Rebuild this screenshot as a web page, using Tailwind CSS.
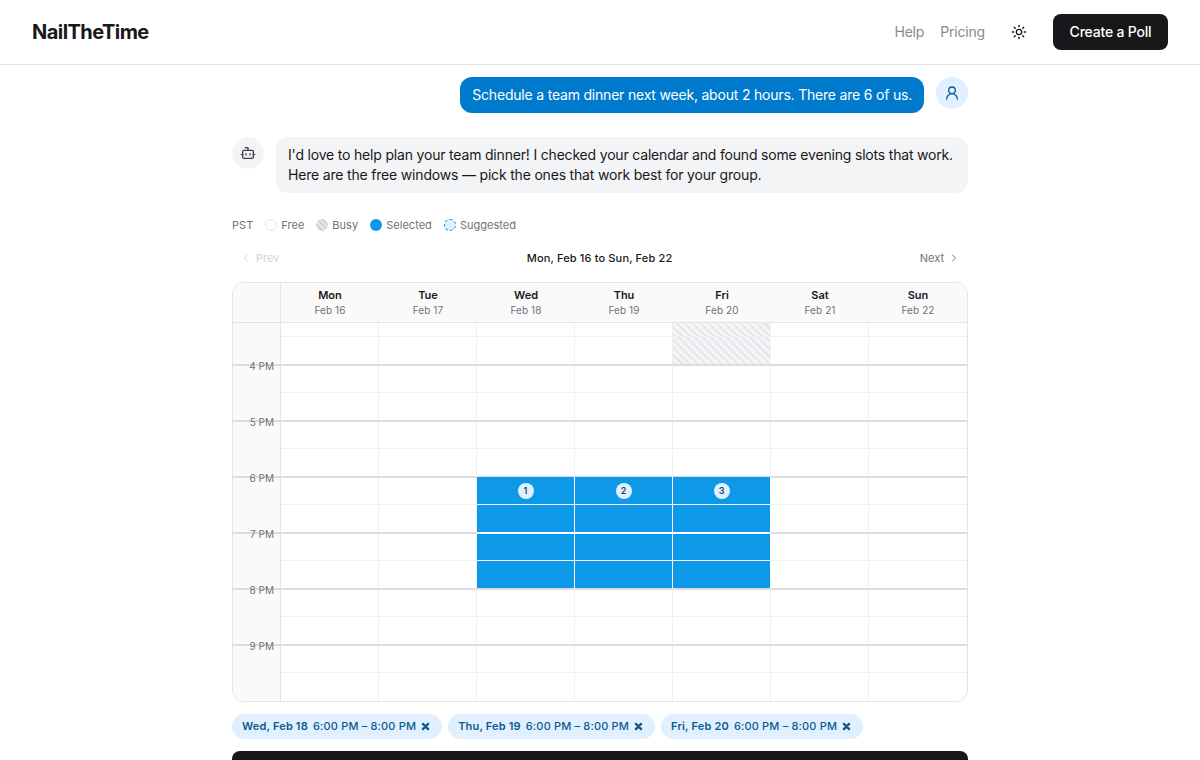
<!DOCTYPE html>
<html lang="en">

<head>
    <meta charset="UTF-8">
    <meta name="viewport" content="width=device-width, initial-scale=1.0">
    <title>NailTheTime</title>
    <script src="https://cdn.jsdelivr.net/npm/@tailwindcss/browser@4"></script>
</head>

<body class="font-['Inter',sans-serif] bg-white text-[#18181b]">
    <!-- Header -->
    <header class="flex items-center justify-between h-[65px] px-8 border-b border-[#e4e4e7]">
        <a href="#" class="text-xl font-bold tracking-[-0.55px] text-[#18181b]">NailTheTime</a>
        <nav class="flex items-center">
            <a href="#" class="text-sm tracking-[-0.185px] text-[#8a8a91]">Help</a>
            <a href="#" class="ml-4 text-sm tracking-[-0.185px] text-[#8a8a91]">Pricing</a>
            <button class="ml-[26px] w-4 h-4 text-[#18181b]">
                <svg viewBox="0 0 24 24" width="16" height="16" fill="none" stroke="currentColor" stroke-width="2" stroke-linecap="round" stroke-linejoin="round"><circle cx="12" cy="12" r="4"/><path d="M12 2v2"/><path d="M12 20v2"/><path d="m4.93 4.93 1.41 1.41"/><path d="m17.66 17.66 1.41 1.41"/><path d="M2 12h2"/><path d="M20 12h2"/><path d="m6.34 17.66-1.41 1.41"/><path d="m19.07 4.93-1.41 1.41"/></svg>
            </button>
            <button class="ml-[26px] h-9 w-[115px] rounded-lg bg-[#18181b] text-white text-sm tracking-[-0.2px] font-medium">Create a Poll</button>
        </nav>
    </header>

    <main class="w-[736px] mx-auto pt-3">
        <!-- User message -->
        <div class="flex justify-end items-start gap-3">
            <div class="bg-[#007acc] text-white text-sm tracking-[-0.2px] leading-5 rounded-xl px-3 py-2">Schedule a team dinner next week, about 2 hours. There are 6 of us.</div>
            <div class="w-8 h-8 rounded-full bg-[#e0f0fe] flex items-center justify-center text-[#0c5a8f]">
                <svg viewBox="0 0 24 24" width="16" height="16" fill="none" stroke="currentColor" stroke-width="2" stroke-linecap="round" stroke-linejoin="round"><circle cx="12" cy="8" r="5"/><path d="M20 21a8 8 0 0 0-16 0"/></svg>
            </div>
        </div>

        <!-- Assistant message -->
        <div class="flex items-start gap-3 mt-6">
            <div class="w-8 h-8 rounded-full bg-[#f3f4f6] flex items-center justify-center text-[#3f3f46]">
                <svg viewBox="0 0 24 24" width="16" height="16" fill="none" stroke="currentColor" stroke-width="2" stroke-linecap="round" stroke-linejoin="round"><path d="M12 8V4H8"/><rect width="16" height="12" x="4" y="8" rx="2"/><path d="M2 14h2"/><path d="M20 14h2"/><path d="M15 13v2"/><path d="M9 13v2"/></svg>
            </div>
            <div class="bg-[#f3f4f6] text-[#18181b] text-sm tracking-[-0.185px] leading-5 rounded-xl px-3 py-2 w-[692px]">I'd love to help plan your team dinner! I checked your calendar and found some evening slots that work. Here are the free windows — pick the ones that work best for your group.</div>
        </div>

        <!-- Legend -->
        <div class="flex items-center mt-6 h-4 text-[11px] tracking-[0.03px] text-[#71717a]">
            <span>PST</span>
            <span class="ml-3 w-3 h-3 rounded-full border border-[#e4e4e7] bg-white"></span>
            <span class="ml-1">Free</span>
            <span class="ml-3 w-3 h-3 rounded-full bg-[repeating-linear-gradient(45deg,#d4d4d8,#d4d4d8_2px,#e8e8eb_2px,#e8e8eb_4px)]"></span>
            <span class="ml-1">Busy</span>
            <span class="ml-3 w-3 h-3 rounded-full bg-[#0e98e8]"></span>
            <span class="ml-1">Selected</span>
            <span class="ml-3 w-3 h-3 rounded-full bg-[#e0f0fe] border border-dashed border-[#0e98e8]"></span>
            <span class="ml-1">Suggested</span>
        </div>

        <!-- Week navigation -->
        <div class="flex items-center justify-between h-7 mt-[11px] text-[11px]">
            <button class="flex items-center gap-1 px-2 text-[#d4d4d8]">
                <svg viewBox="0 0 24 24" width="12" height="12" fill="none" stroke="currentColor" stroke-width="2" stroke-linecap="round" stroke-linejoin="round"><path d="m15 18-6-6 6-6"/></svg>
                Prev
            </button>
            <span class="font-medium tracking-[0.15px] text-[#18181b]">Mon, Feb 16 to Sun, Feb 22</span>
            <button class="flex items-center gap-1 px-2 text-[#71717a]">
                Next
                <svg viewBox="0 0 24 24" width="12" height="12" fill="none" stroke="currentColor" stroke-width="2" stroke-linecap="round" stroke-linejoin="round"><path d="m9 18 6-6-6-6"/></svg>
            </button>
        </div>

        <!-- Calendar -->
        <div class="mt-[10px] border border-[#e4e4e7] rounded-xl overflow-hidden">
            <div class="grid grid-cols-[48px_repeat(7,1fr)] h-10 pb-[2px] border-b border-[#e4e4e7] bg-[#fafafb] bg-[radial-gradient(#ececf0_0.6px,transparent_0.6px)] bg-[size:4px_4px]">
                <div class="border-r border-[#e4e4e7] -mb-[2px]"></div>
                <div class="flex flex-col items-center justify-center"><span class="text-[11px] leading-4 font-semibold">Mon</span><span class="text-[10px] leading-[14px] tracking-[0.1px] text-[#71717a]">Feb 16</span></div>
                <div class="flex flex-col items-center justify-center"><span class="text-[11px] leading-4 font-semibold">Tue</span><span class="text-[10px] leading-[14px] tracking-[0.1px] text-[#71717a]">Feb 17</span></div>
                <div class="flex flex-col items-center justify-center"><span class="text-[11px] leading-4 font-semibold">Wed</span><span class="text-[10px] leading-[14px] tracking-[0.1px] text-[#71717a]">Feb 18</span></div>
                <div class="flex flex-col items-center justify-center"><span class="text-[11px] leading-4 font-semibold">Thu</span><span class="text-[10px] leading-[14px] tracking-[0.1px] text-[#71717a]">Feb 19</span></div>
                <div class="flex flex-col items-center justify-center"><span class="text-[11px] leading-4 font-semibold">Fri</span><span class="text-[10px] leading-[14px] tracking-[0.1px] text-[#71717a]">Feb 20</span></div>
                <div class="flex flex-col items-center justify-center"><span class="text-[11px] leading-4 font-semibold">Sat</span><span class="text-[10px] leading-[14px] tracking-[0.1px] text-[#71717a]">Feb 21</span></div>
                <div class="flex flex-col items-center justify-center"><span class="text-[11px] leading-4 font-semibold">Sun</span><span class="text-[10px] leading-[14px] tracking-[0.1px] text-[#71717a]">Feb 22</span></div>
            </div>
            <div id="grid" class="grid grid-cols-[48px_repeat(7,1fr)]"></div>
        </div>

        <!-- Selected windows -->
        <div class="flex gap-[6px] mt-3">
            <span class="flex items-center h-[25px] pl-[10px] pr-3 rounded-full bg-[#e0f0fe] text-[11px] tracking-[0.17px] text-[#0c5a8f]"><b class="font-semibold">Wed, Feb 18</b><span class="ml-[5px] font-medium">6:00 PM – 8:00 PM</span><svg class="ml-[5px]" viewBox="0 0 24 24" width="9" height="9" fill="none" stroke="currentColor" stroke-width="6" stroke-linecap="round"><path d="M5 5l14 14M19 5L5 19"/></svg></span>
            <span class="flex items-center h-[25px] pl-[10px] pr-3 rounded-full bg-[#e0f0fe] text-[11px] tracking-[0.17px] text-[#0c5a8f]"><b class="font-semibold">Thu, Feb 19</b><span class="ml-[5px] font-medium">6:00 PM – 8:00 PM</span><svg class="ml-[5px]" viewBox="0 0 24 24" width="9" height="9" fill="none" stroke="currentColor" stroke-width="6" stroke-linecap="round"><path d="M5 5l14 14M19 5L5 19"/></svg></span>
            <span class="flex items-center h-[25px] pl-[10px] pr-3 rounded-full bg-[#e0f0fe] text-[11px] tracking-[0.17px] text-[#0c5a8f]"><b class="font-semibold">Fri, Feb 20</b><span class="ml-[5px] font-medium">6:00 PM – 8:00 PM</span><svg class="ml-[5px]" viewBox="0 0 24 24" width="9" height="9" fill="none" stroke="currentColor" stroke-width="6" stroke-linecap="round"><path d="M5 5l14 14M19 5L5 19"/></svg></span>
        </div>

        <button class="block w-full h-11 mt-3 rounded-lg bg-[#18181b]"></button>
    </main>

    <script>
        // 14 half hour rows, the first one cut in half. Odd rows end on the hour.
        // An hour line is 2px: the bottom border of one row and the top border of the next.
        const hours = { 1: '4 PM', 3: '5 PM', 5: '6 PM', 7: '7 PM', 9: '8 PM', 11: '9 PM' };
        const grid = document.getElementById('grid');
        let html = '';

        for (let row = 0; row < 14; row++) {
            const height = row === 0 ? 'h-[14px]' : 'h-[28px]';
            const endsHour = row % 2 === 1 && row < 13;
            const startsHour = row % 2 === 0 && row > 0;
            const bottom = row === 13 ? '' : endsHour ? 'border-b border-b-[#dcdce0]' : 'border-b border-b-[#f0f0f2]';
            const top = startsHour ? 'border-t border-t-[#dcdce0]' : '';

            const label = hours[row]
                ? `<span class="absolute right-[6px] bottom-[-9px] z-10 text-[10px] leading-[14px] text-[#71717a]">${hours[row]}</span>`
                : '';
            const gutterBottom = endsHour ? 'border-b border-b-[#dcdce0]' : '';
            html += `<div class="relative ${height} ${gutterBottom} ${top} border-r border-r-[#e4e4e7] bg-[#fafafb] bg-[radial-gradient(#ececf0_0.6px,transparent_0.6px)] bg-[size:4px_4px]">${label}</div>`;

            for (let day = 0; day < 7; day++) {
                const selected = day >= 2 && day <= 4 && row >= 6 && row <= 9;
                const busy = day === 4 && row <= 1;
                const right = day === 6 ? '' : 'border-r border-r-[#f0f0f2]';
                let cell = `${height} ${top} ${bottom} ${right}`;
                if (selected) {
                    const selectedTop = row === 8 ? 'border-t border-t-white' : '';
                    const selectedBottom = row === 9 ? 'border-b border-b-[#dcdce0]' : 'border-b border-b-white';
                    cell = `${height} ${selectedTop} ${selectedBottom} border-r border-r-white bg-[#0e98e8] flex items-center justify-center`;
                }
                if (busy) cell = `${height} ${bottom} ${right} bg-[#f4f4f6] bg-[repeating-linear-gradient(45deg,#e4e4e8,#e4e4e8_1.5px,#f4f4f6_1.5px,#f4f4f6_5.6px)]`;
                const badge = selected && row === 6
                    ? `<span class="flex items-center justify-center w-4 h-4 rounded-full bg-[#e0f0fe] text-[9px] font-semibold text-[#0c4a7a]">${day - 1}</span>`
                    : '';
                html += `<div class="${cell}">${badge}</div>`;
            }
        }
        grid.innerHTML = html;
    </script>
</body>

</html>
